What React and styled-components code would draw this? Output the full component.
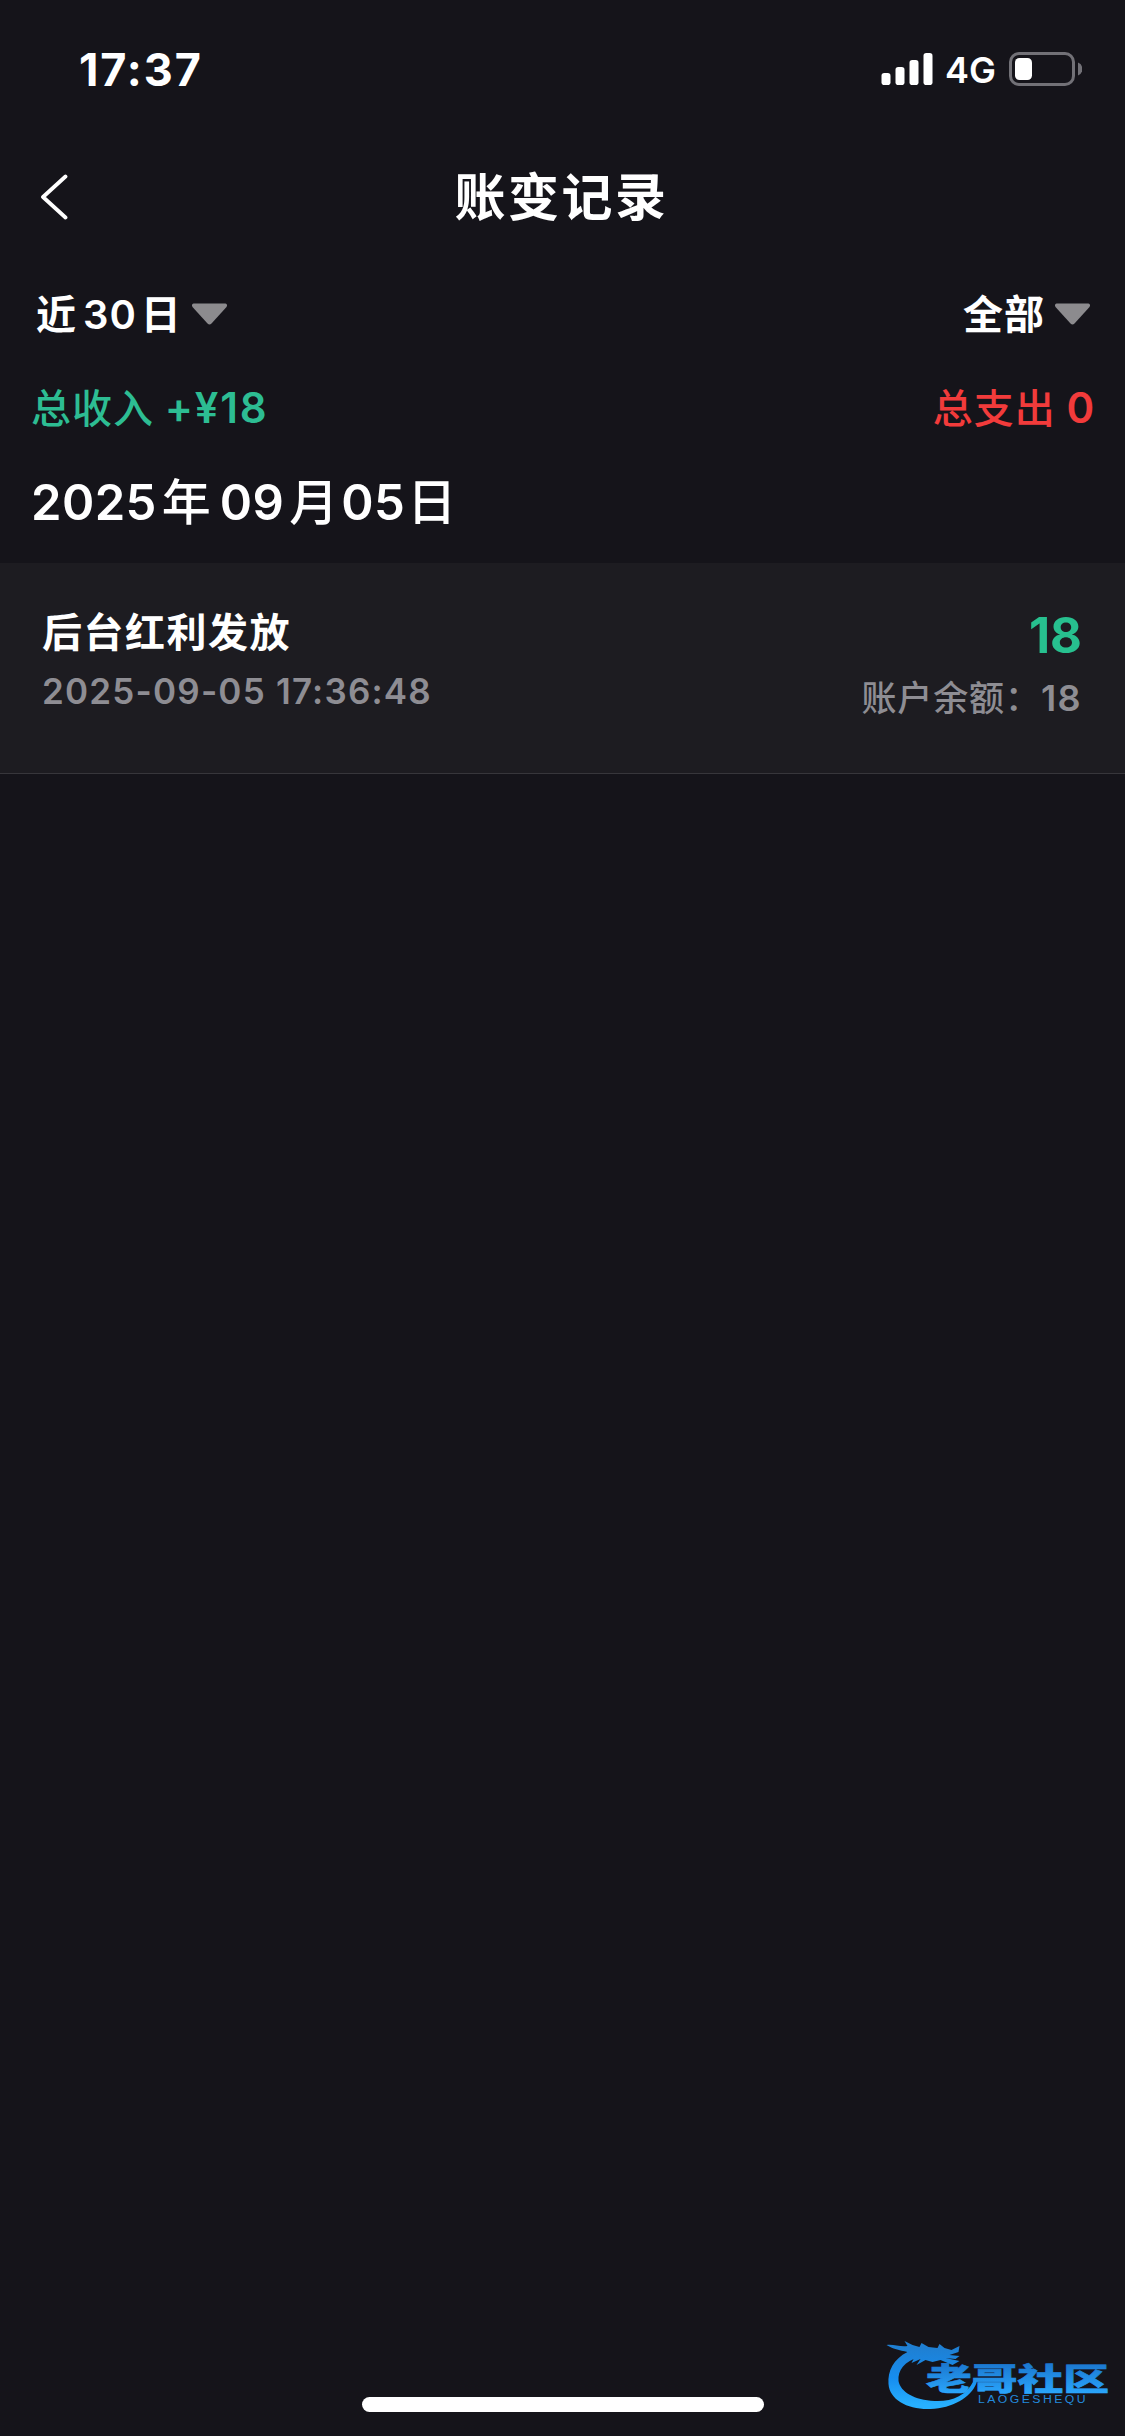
import React from "react";
import styled, { createGlobalStyle } from "styled-components";

const GlobalStyle = createGlobalStyle`
  body {
    margin: 0;
    background: #15141a;
  }
  * {
    box-sizing: border-box;
  }
`;

const Screen = styled.div`
  position: relative;
  display: flex;
  flex-direction: column;
  width: 1125px;
  height: 2436px;
  overflow: hidden;
  background: #15141a;
  color: #ffffff;
  font-family: Inter, "Noto Sans CJK SC", sans-serif;
  white-space: nowrap;
`;

// STATUS BAR
const StatusBar = styled.div`
  display: flex;
  justify-content: space-between;
  height: 132px;
  padding: 0 43px 0 79px;
`;

const Clock = styled.div`
  padding-top: 43px;
  font-size: 45px;
  font-weight: 700;
  line-height: 54px;
  letter-spacing: 1.9px;
`;

const StatusIcons = styled.div`
  display: flex;
  align-items: flex-start;
  padding-top: 52px;
`;

const Network = styled.span`
  width: 75px;
  margin-top: -3px;
  padding-left: 12px;
  font-size: 36px;
  font-weight: 600;
  line-height: 42px;
`;

// NAV BAR
const NavBar = styled.header`
  display: grid;
  grid-template-columns: 119px 1fr 121px;
  align-items: center;
  height: 132px;
`;

const BackButton = styled.button`
  display: flex;
  padding: 0 0 2px 39px;
  border: none;
  background: none;
`;

const Title = styled.h1`
  margin: 0;
  font-size: 51px;
  font-weight: 700;
  line-height: 70px;
  letter-spacing: 2.5px;
  text-align: center;
`;

// FILTERS AND TOTALS
const Row = styled.div`
  display: flex;
  align-items: center;
  justify-content: space-between;
  height: ${(props) => props.$height}px;
  padding: 0 ${(props) => props.$right}px ${(props) => props.$bottom}px
    ${(props) => props.$left}px;
`;

const Filter = styled.button`
  display: flex;
  align-items: center;
  gap: 9px;
  padding: 0;
  border: none;
  background: none;
  color: inherit;
  font: inherit;
  font-size: 40px;
  font-weight: 600;
  letter-spacing: 1px;
`;

const FilterLabel = styled.span`
  padding-bottom: 5px;
`;

const Run = styled.span`
  margin: 0 ${(props) => props.$after}px 0 ${(props) => props.$before}px;
`;

const Total = styled.span`
  color: ${(props) => props.$color};
  font-size: 40px;
  font-weight: 500;
  letter-spacing: 1px;
`;

const Figure = styled.span`
  margin-left: -1px;
  font-size: 42px;
  font-weight: 600;
  letter-spacing: 1.8px;
`;

const DateHeading = styled.h2`
  margin: 0;
  font-size: 49px;
  font-weight: 500;
  letter-spacing: 1px;
`;

const DateDigits = styled.span`
  font-weight: 600;
  letter-spacing: 0.4px;
`;

// RECORD
const Record = styled.section`
  display: flex;
  justify-content: space-between;
  height: 211px;
  padding: 0 43px 0 42px;
  border-bottom: 1px solid #37363b;
  background: #1d1c21;
`;

const RecordSide = styled.div`
  display: flex;
  flex-direction: column;
  align-items: ${(props) => props.$align};
`;

const RecordName = styled.span`
  margin-top: 40px;
  font-size: 40px;
  font-weight: 700;
  line-height: 60px;
  letter-spacing: 1.5px;
`;

const RecordTime = styled.span`
  margin-top: 6px;
  color: #8e8d93;
  font-size: 35px;
  font-weight: 600;
  line-height: 44px;
  letter-spacing: 1.2px;
`;

const Amount = styled.span`
  margin-top: 44px;
  color: #27c08f;
  font-size: 49px;
  font-weight: 700;
  line-height: 58px;
`;

const Balance = styled.span`
  margin-top: 8px;
  color: #8e8d93;
  font-size: 35px;
  font-weight: 500;
  line-height: 50px;
  letter-spacing: 0.9px;
`;

const BalanceFigure = styled.span`
  font-size: 36px;
  font-weight: 600;
  letter-spacing: 1.4px;
`;

const HomeIndicator = styled.div`
  width: 402px;
  height: 15px;
  margin: auto auto 24px 362px;
  border-radius: 8px;
  background: #ffffff;
`;

const Watermark = styled.svg`
  position: absolute;
  right: 11px;
  bottom: 20px;
`;

const Signal = () => (
  <svg width="52" height="34" viewBox="0 0 52 34" fill="#fff">
    <rect x="0.5" y="21" width="9" height="12" rx="2.8" />
    <rect x="14.5" y="15" width="9" height="18" rx="2.8" />
    <rect x="28.5" y="8" width="9" height="25" rx="2.8" />
    <rect x="42.5" y="1" width="9" height="32" rx="2.8" />
  </svg>
);

const Battery = () => (
  <svg width="74" height="34" viewBox="0 0 74 34">
    <rect
      x="2.5"
      y="1.5"
      width="63"
      height="31"
      rx="8.5"
      fill="none"
      stroke="#727177"
      strokeWidth="3"
    />
    <path d="M70 10.500a7 7 0 0 1 0 13z" fill="#727177" />
    <rect x="7" y="6" width="17" height="22" rx="4.500" fill="#fff" />
  </svg>
);

const BackIcon = () => (
  <svg width="30" height="46" viewBox="0 0 30 46">
    <path
      d="M26.500 2.500L4 23L26.500 43.500"
      fill="none"
      stroke="#fff"
      strokeWidth="3.800"
      strokeLinecap="round"
      strokeLinejoin="round"
    />
  </svg>
);

const Caret = () => (
  <svg width="37" height="23" viewBox="0 0 37 23">
    <path
      d="M2.500 0.500H34.500Q37 1.500 35.500 4L20.500 20.500Q18.500 22.500 16.500 20.500L1.500 4Q0 1.500 2.500 0.500Z"
      fill="#8c8b8e"
    />
  </svg>
);

const SiteMark = () => (
  <Watermark width="228" height="76" viewBox="0 0 228 76">
    <defs>
      <linearGradient id="dragon" x1="0" y1="0" x2="0" y2="76" gradientUnits="userSpaceOnUse">
        <stop offset="0.1" stopColor="#1f7fd2" />
        <stop offset="0.5" stopColor="#168df0" />
        <stop offset="0.85" stopColor="#27b0ff" />
      </linearGradient>
      <linearGradient id="name" x1="0" y1="24" x2="0" y2="53" gradientUnits="userSpaceOnUse">
        <stop offset="0" stopColor="#1b78d0" />
        <stop offset="1" stopColor="#2aa5fb" />
      </linearGradient>
    </defs>
    {/* dragon body, then head with horns and whiskers */}
    <g fill="url(#dragon)" transform="translate(-7.500 0)">
      <path d="M29 12C15 19 9 31 10 44C11 60 30 70 52 69C74 68 92 58 98 43C98 40 96 38 95 41C88 56 72 62 56 61C36 60 22 52 20 41C19 30 26 21 41 17Z" />
      <path d="M8 5C15 4 21 7 29 6L26 1L34 5L41 7L43 3L50 7L59 8L61 4L66 8L73 10L81 6L80 12L71 15L81 16L77 19L67 18L81 21L74 25L62 20L54 22L47 20L38 25L42 19L33 23L36 17L26 20L29 12C21 10 14 9 8 5Z" />
    </g>
    <text
      x="40"
      y="50"
      textLength="183"
      lengthAdjust="spacingAndGlyphs"
      fontFamily="'Liberation Sans', 'Noto Sans CJK SC', sans-serif"
      fontSize="31"
      fontWeight="900"
      fill="url(#name)"
      stroke="url(#name)"
      strokeWidth="0.6"
    >
      老哥社区
    </text>
    <text
      x="92"
      y="63"
      textLength="110"
      lengthAdjust="spacingAndGlyphs"
      letterSpacing="2"
      fontFamily="'Liberation Sans', sans-serif"
      fontSize="10"
      fill="#2389dc"
    >
      LAOGESHEQU
    </text>
  </Watermark>
);

const App = () => {
  return (
    <>
      <GlobalStyle />
      <Screen>
        <StatusBar>
          <Clock>17:37</Clock>
          <StatusIcons>
            <Signal />
            <Network>4G</Network>
            <Battery />
          </StatusIcons>
        </StatusBar>
        <NavBar>
          <BackButton aria-label="返回">
            <BackIcon />
          </BackButton>
          <Title>账变记录</Title>
        </NavBar>
        <Row $height={100} $left={36} $right={34} $bottom={0}>
          <Filter>
            <FilterLabel>
              近
              <Run $before={6} $after={4}>
                30
              </Run>
              日
            </FilterLabel>
            <Caret />
          </Filter>
          <Filter>
            <FilterLabel>全部</FilterLabel>
            <Caret />
          </Filter>
        </Row>
        <Row $height={89} $left={31} $right={29} $bottom={5}>
          <Total $color="#2dbd93">
            总收入 <Figure>+¥18</Figure>
          </Total>
          <Total $color="#f23b3b">
            总支出 <Figure>0</Figure>
          </Total>
        </Row>
        <Row $height={110} $left={31} $right={30} $bottom={20}>
          <DateHeading>
            <DateDigits>2025</DateDigits>
            <Run $before={5} $after={8}>
              年
            </Run>
            <DateDigits>09</DateDigits>
            <Run $before={5} $after={2}>
              月
            </Run>
            <DateDigits>05</DateDigits>
            <Run $before={2} $after={0}>
              日
            </Run>
          </DateHeading>
        </Row>
        <Record>
          <RecordSide $align="flex-start">
            <RecordName>后台红利发放</RecordName>
            <RecordTime>2025-09-05 17:36:48</RecordTime>
          </RecordSide>
          <RecordSide $align="flex-end">
            <Amount>18</Amount>
            <Balance>
              账户余额：<BalanceFigure>18</BalanceFigure>
            </Balance>
          </RecordSide>
        </Record>
        <HomeIndicator />
        <SiteMark />
      </Screen>
    </>
  );
};

export default App;
